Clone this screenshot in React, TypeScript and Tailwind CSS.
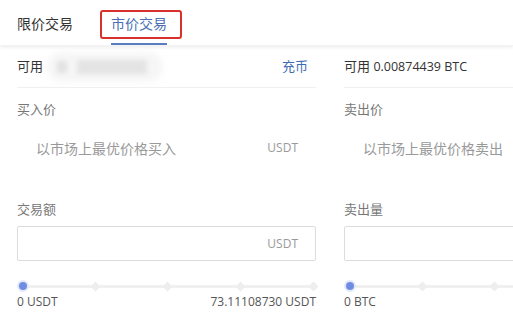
import { FC } from 'react';

const FONT = { fontFamily: '"Open Sans", "Noto Sans CJK SC", sans-serif' };

const Slider: FC<{ left: string; right?: string }> = ({ left, right }) => (
  <>
    <div className="relative mt-[19px] h-[12px] flex items-center">
      <div className="absolute left-[6px] right-0 h-[3px] bg-[#f0f0f0] rounded-full" />
      {[78, 150, 223, 296].map((x) => (
        <div
          key={x}
          className="absolute w-[7px] h-[7px] rotate-45 bg-[#eeeeee]"
          style={{ left: x - 3 }}
        />
      ))}
      <div className="relative w-[12px] h-[12px] rounded-full bg-white border-[2px] border-[#e3e9f8] flex items-center justify-center">
        <div className="w-[8px] h-[8px] rounded-full bg-[#6f8de0]" />
      </div>
    </div>
    <div className="mt-[2px] flex justify-between text-[12px] leading-[16px] text-[#555]">
      <span>{left}</span>
      {right && <span>{right}</span>}
    </div>
  </>
);

const Column: FC<{
  avail: React.ReactNode;
  priceLabel: string;
  placeholder: string;
  showUnit: boolean;
  amountLabel: string;
  sliderLeft: string;
  sliderRight?: string;
  inputUnit?: string;
}> = ({ avail, priceLabel, placeholder, showUnit, amountLabel, sliderLeft, sliderRight, inputUnit }) => (
  <div className="w-[299px] shrink-0">
    <div className="h-[42px] flex items-center justify-between border-b border-[#f0f0f0] text-[13px]">
      {avail}
    </div>
    <div className="h-[44px] flex items-center text-[13px] text-[#777]">{priceLabel}</div>
    <div className="h-[32px] flex items-center justify-between pl-[19px] pr-[18px]">
      <span className="text-[14px] text-[#999]">{placeholder}</span>
      {showUnit && <span className="text-[12px] text-[#999]">USDT</span>}
    </div>
    <div className="mt-[34px] h-[24px] flex items-center text-[13px] text-[#777]">{amountLabel}</div>
    <div className="mt-[4px] h-[35px] border border-[#dcdcdc] rounded-[2px] flex items-center justify-end pr-[17px]">
      {inputUnit && <span className="text-[12px] text-[#999]">{inputUnit}</span>}
    </div>
    <Slider left={sliderLeft} right={sliderRight} />
  </div>
);

export default function App() {
  return (
    <div className="w-[513px] h-[322px] bg-white overflow-hidden relative" style={FONT}>
      <div className="h-[46px] flex items-end px-[17px] gap-[38px] shadow-[0_2px_3px_rgba(0,0,0,0.06)] border-b border-[#f2f2f2]">
        <div className="h-[44px] flex items-center text-[14px] text-[#333]">限价交易</div>
        <div className="h-[44px] flex items-center text-[14px] text-[#4a6fb5] border-b-[2px] border-[#5a7cc0] pt-[2px]">
          市价交易
        </div>
      </div>
      <div className="absolute left-[100px] top-[10px] w-[82px] h-[29px] border-[2px] border-[#d8302a] rounded-[3px]" />

      <div className="flex gap-[28px] px-[17px]">
        <Column
          avail={
            <>
              <div className="flex items-center">
                <span className="text-[#333]">可用</span>
                <div className="relative ml-[4px] w-[116px] h-[30px] flex items-center">
                  <div className="absolute inset-0 rounded-full bg-[#f6f6f6] blur-[3px]" />
                  <div className="relative flex items-center gap-[10px] pl-[10px] blur-[2px]">
                    <div className="w-[10px] h-[12px] bg-[#e2e2e2]" />
                    <div className="w-[70px] h-[14px] bg-[#e4e4e4]" />
                  </div>
                </div>
              </div>
              <span className="text-[#3f6db3] pr-[8px]">充币</span>
            </>
          }
          priceLabel="买入价"
          placeholder="以市场上最优价格买入"
          showUnit
          amountLabel="交易额"
          inputUnit="USDT"
          sliderLeft="0 USDT"
          sliderRight="73.11108730 USDT"
        />
        <Column
          avail={<span className="text-[#333]">可用 <span className="text-[12.5px]">0.00874439 BTC</span></span>}
          priceLabel="卖出价"
          placeholder="以市场上最优价格卖出"
          showUnit={false}
          amountLabel="卖出量"
          sliderLeft="0 BTC"
        />
      </div>
    </div>
  );
}
